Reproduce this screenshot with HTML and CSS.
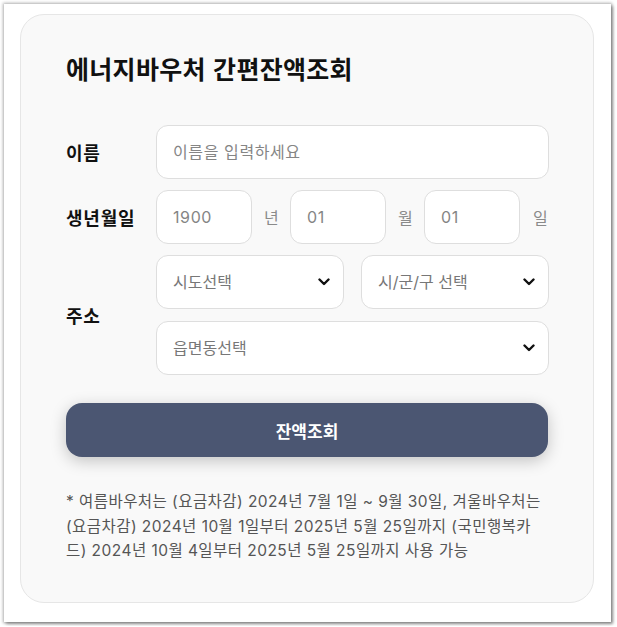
FILE: index.html
```html
<!DOCTYPE html>
<html lang="ko">
<head>
    <meta charset="UTF-8">
    <meta name="viewport" content="width=device-width, initial-scale=1.0">
    <title>에너지바우처 간편잔액조회</title>
    <link rel="stylesheet" href="styles.css">
</head>
<body>
    <div class="frame">
        <div class="card">
            <h1>에너지바우처 간편잔액조회</h1>

            <form class="voucher-form" id="voucherForm">
                <label class="field-label" for="name">이름</label>
                <input type="text" id="name" class="text-input" placeholder="이름을 입력하세요">

                <label class="field-label" for="year">생년월일</label>
                <div class="birth-row">
                    <input type="text" id="year" class="text-input" placeholder="1900">
                    <span class="unit">년</span>
                    <input type="text" id="month" class="text-input" placeholder="01">
                    <span class="unit">월</span>
                    <input type="text" id="day" class="text-input" placeholder="01">
                    <span class="unit unit-last">일</span>
                </div>

                <label class="field-label address-label" for="sido">주소</label>
                <div class="address-grid">
                    <div class="select-wrap">
                        <select id="sido">
                            <option>시도선택</option>
                        </select>
                        <svg class="chevron" width="12" height="8" viewBox="0 0 12 8"><polyline points="1.5,1.5 6,6 10.5,1.5" fill="none" stroke="#111" stroke-width="2.4" stroke-linecap="round" stroke-linejoin="round"/></svg>
                    </div>
                    <div class="select-wrap">
                        <select id="sigungu">
                            <option>시/군/구 선택</option>
                        </select>
                        <svg class="chevron" width="12" height="8" viewBox="0 0 12 8"><polyline points="1.5,1.5 6,6 10.5,1.5" fill="none" stroke="#111" stroke-width="2.4" stroke-linecap="round" stroke-linejoin="round"/></svg>
                    </div>
                    <div class="select-wrap wide">
                        <select id="emd">
                            <option>읍면동선택</option>
                        </select>
                        <svg class="chevron" width="12" height="8" viewBox="0 0 12 8"><polyline points="1.5,1.5 6,6 10.5,1.5" fill="none" stroke="#111" stroke-width="2.4" stroke-linecap="round" stroke-linejoin="round"/></svg>
                    </div>
                </div>
            </form>

            <button type="submit" form="voucherForm" class="submit-btn">잔액조회</button>

            <p class="note">* 여름바우처는 (요금차감) 2024년 7월 1일 ~ 9월 30일, 겨울바우처는 (요금차감) 2024년 10월 1일부터 2025년 5월 25일까지 (국민행복카드) 2024년 10월 4일부터 2025년 5월 25일까지 사용 가능</p>
        </div>
    </div>
</body>
</html>
```

FILE: styles.css
```css
body {
    margin: 0;
    background-color: #fff;
    font-family: Inter, "Noto Sans CJK KR", sans-serif;
    color: #111;
}

.frame {
    box-sizing: border-box;
    width: 607px;
    height: 618px;
    margin: 4px;
    padding: 10px 17px 19px 16px;
    background-color: #fff;
    box-shadow: 0 0 3px 1px rgba(0, 0, 0, 0.3), 2px 2px 3px rgba(0, 0, 0, 0.35);
}

.card {
    box-sizing: border-box;
    height: 589px;
    padding: 36px 45px 0;
    background-color: #f9f9f9;
    border: 1px solid #e6e6e6;
    border-radius: 24px;
}

h1 {
    margin: 0 0 40px;
    font-size: 25px;
    line-height: 34px;
    font-weight: 700;
    letter-spacing: 0.3px;
    font-family: "Noto Sans CJK KR", sans-serif;
}

.voucher-form {
    display: grid;
    grid-template-columns: 90px 1fr;
    row-gap: 11px;
    align-items: center;
}

.field-label {
    font-family: "Noto Sans CJK KR", sans-serif;
    font-size: 18px;
    font-weight: 700;
    letter-spacing: 0.8px;
}

.text-input,
select {
    box-sizing: border-box;
    width: 100%;
    height: 54px;
    padding: 0 16px;
    background-color: #fff;
    border: 1px solid #dedede;
    border-radius: 12px;
    font-family: Inter, "Noto Sans CJK KR", sans-serif;
    font-size: 16px;
    color: #333;
    outline: none;
}

.text-input::placeholder {
    color: #858585;
    letter-spacing: 0.6px;
}

.birth-row {
    display: flex;
    align-items: center;
}

.birth-row .text-input {
    width: 96px;
    flex: none;
}

.unit {
    margin: 0 10px 0 12px;
    width: 16px;
    font-size: 16px;
    color: #8a8a8a;
}

.unit-last {
    margin-right: 0;
    margin-left: 13px;
}

.address-label {
    align-self: center;
}

.address-grid {
    display: grid;
    grid-template-columns: 1fr 1fr;
    column-gap: 17px;
    row-gap: 12px;
}

.select-wrap {
    position: relative;
}

.select-wrap.wide {
    grid-column: 1 / 3;
}

select {
    appearance: none;
    -webkit-appearance: none;
    color: #777;
}

.chevron {
    position: absolute;
    right: 14px;
    top: 23px;
    pointer-events: none;
}

.submit-btn {
    display: block;
    width: 100%;
    height: 54px;
    margin-top: 28px;
    background-color: #4b5672;
    color: #fff;
    border: none;
    border-radius: 16px;
    font-family: "Noto Sans CJK KR", sans-serif;
    font-size: 17px;
    font-weight: 700;
    box-shadow: 0 4px 16px rgba(0, 0, 0, 0.22);
    cursor: pointer;
}

.submit-btn:hover {
    background-color: #414b64;
}

.note {
    margin: 33px 0 0;
    font-size: 15.5px;
    line-height: 24.5px;
    color: #555;
    letter-spacing: 0.45px;
}
```
